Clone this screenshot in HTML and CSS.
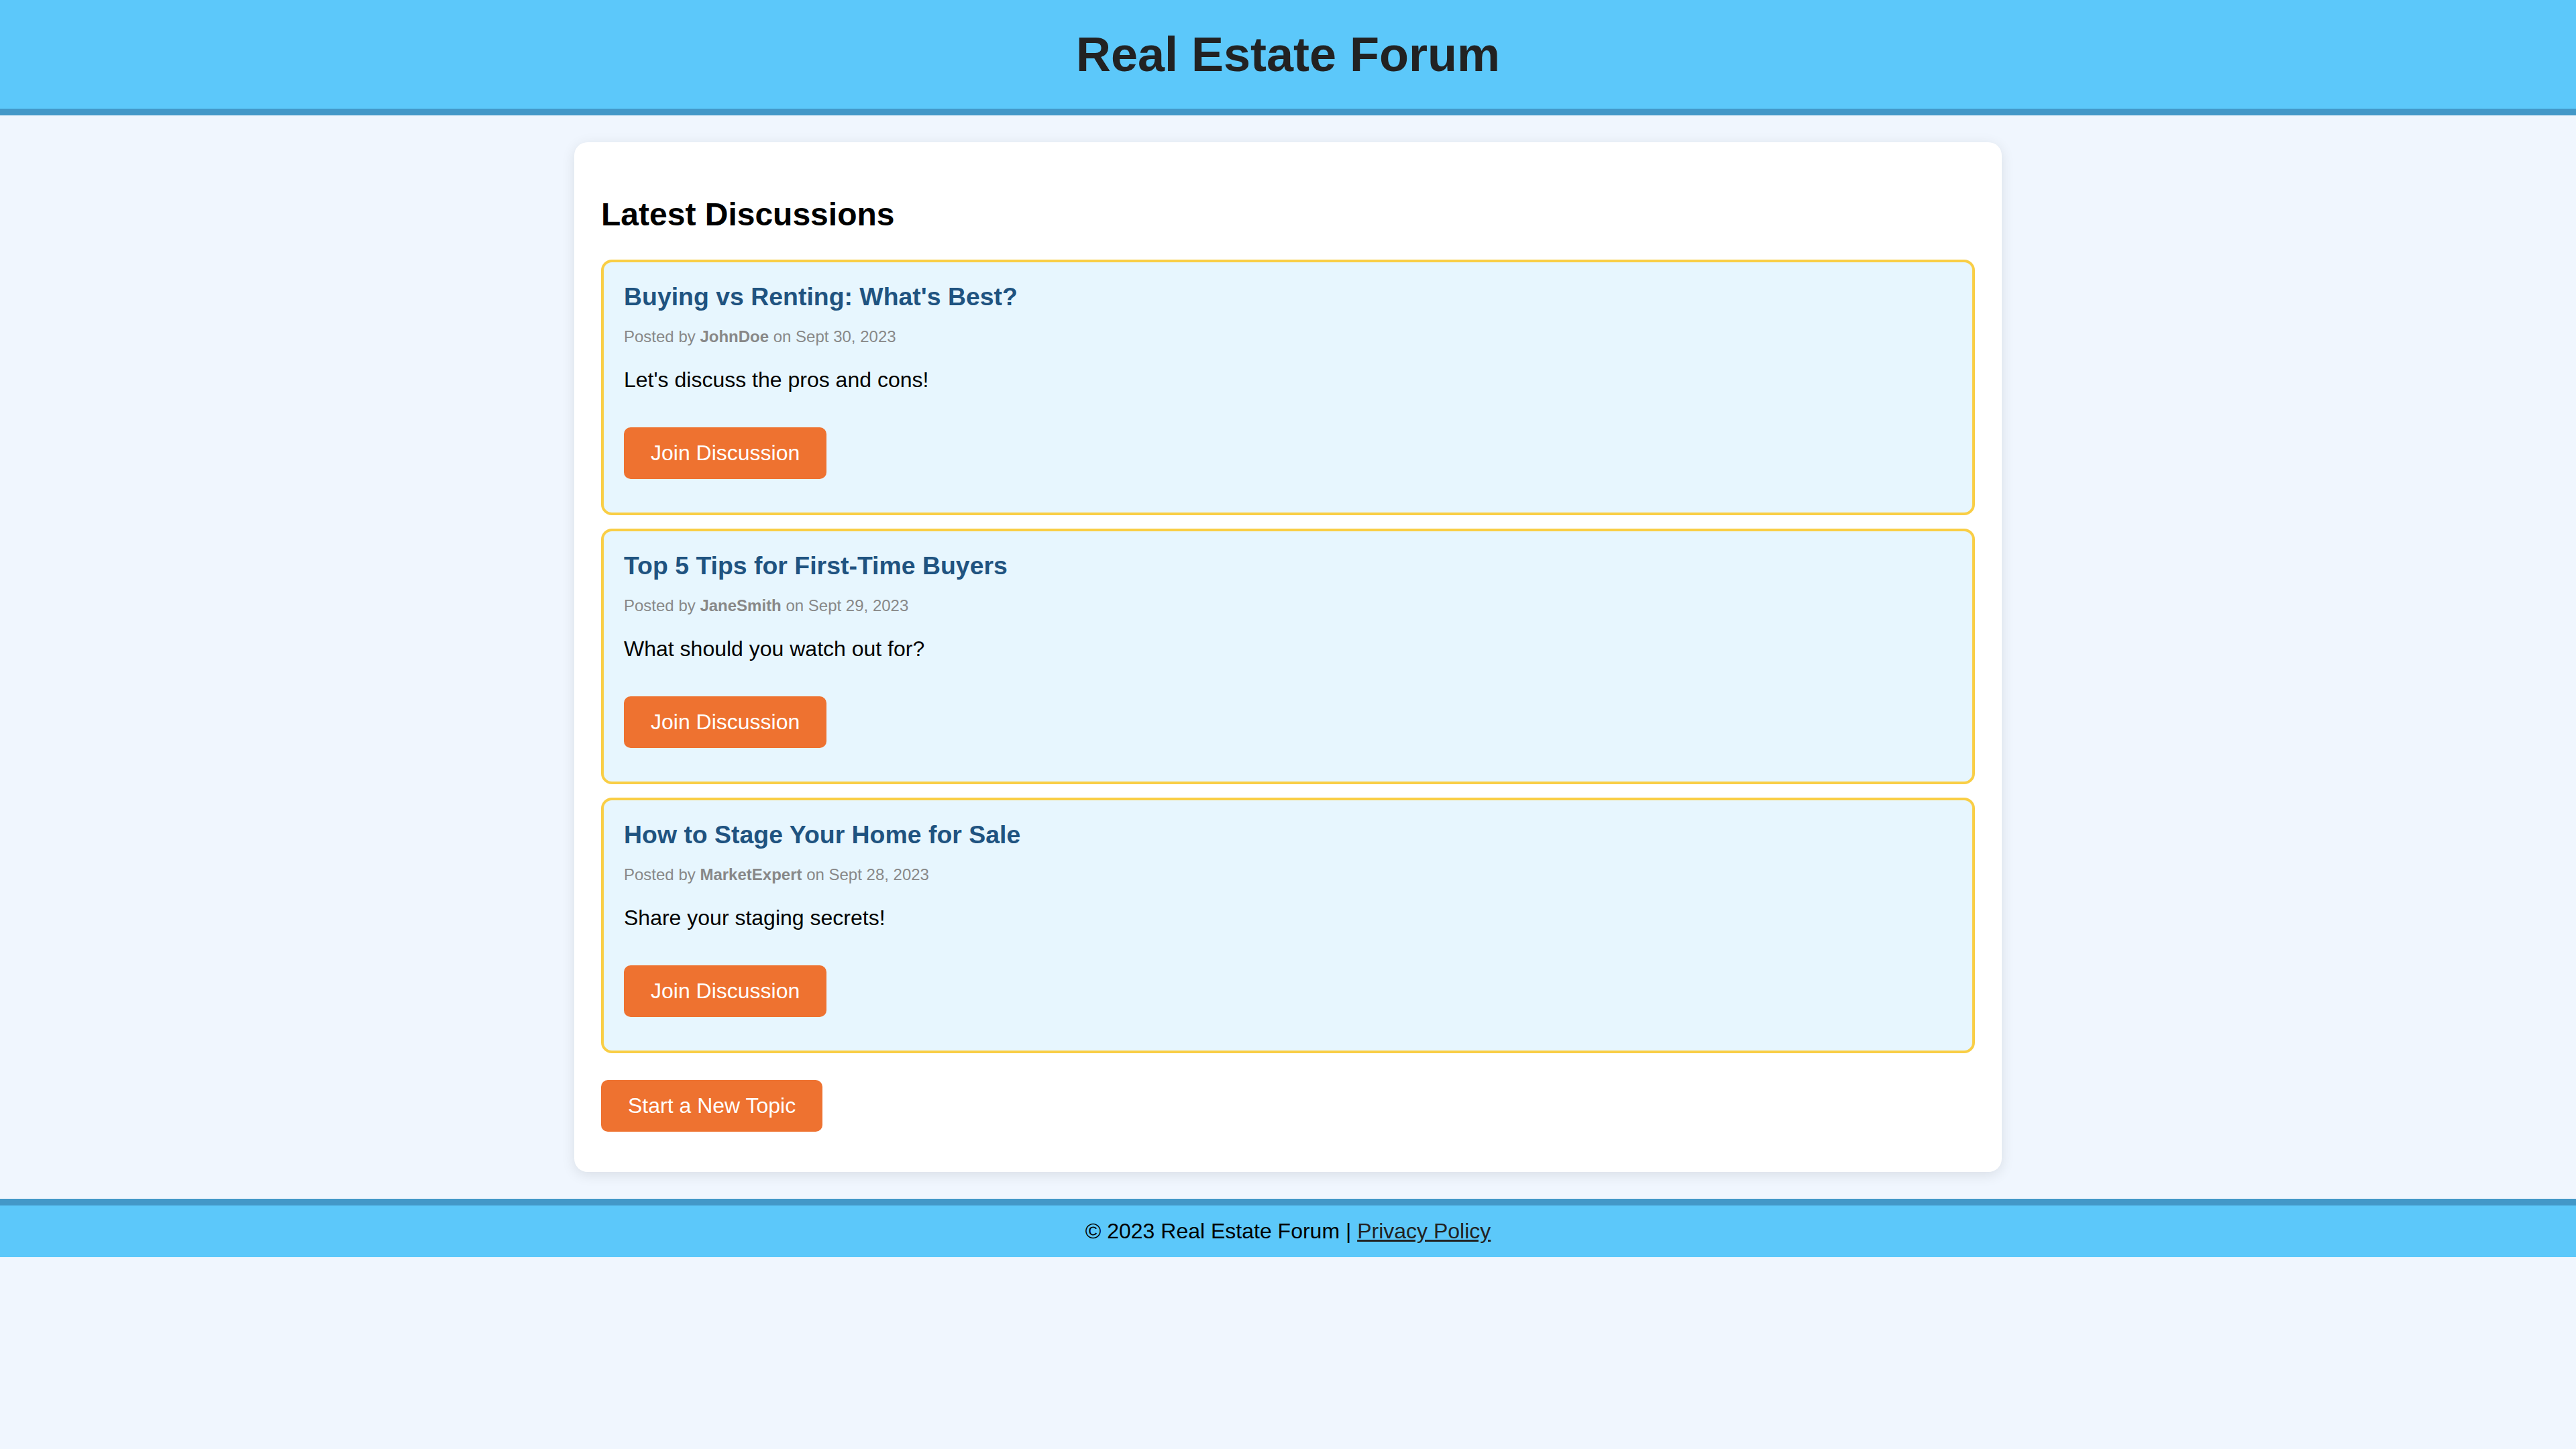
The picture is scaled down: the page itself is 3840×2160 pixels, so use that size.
FILE: index.html
```html
<!DOCTYPE html>
<html lang="en">
<head>
<meta charset="utf-8">
<title>Real Estate Forum</title>
<link rel="stylesheet" href="styles.css">
</head>
<body>
<header class="site-header">
  <h1 class="site-title">Real Estate Forum</h1>
</header>
<main class="container">
  <h2 class="section-title">Latest Discussions</h2>
  <article class="post">
    <h3 class="post-title">Buying vs Renting: What's Best?</h3>
    <p class="post-meta">Posted by <strong>JohnDoe</strong> on Sept 30, 2023</p>
    <p class="post-body">Let's discuss the pros and cons!</p>
    <a class="btn" href="#">Join Discussion</a>
  </article>
  <article class="post">
    <h3 class="post-title">Top 5 Tips for First-Time Buyers</h3>
    <p class="post-meta">Posted by <strong>JaneSmith</strong> on Sept 29, 2023</p>
    <p class="post-body">What should you watch out for?</p>
    <a class="btn" href="#">Join Discussion</a>
  </article>
  <article class="post">
    <h3 class="post-title">How to Stage Your Home for Sale</h3>
    <p class="post-meta">Posted by <strong>MarketExpert</strong> on Sept 28, 2023</p>
    <p class="post-body">Share your staging secrets!</p>
    <a class="btn" href="#">Join Discussion</a>
  </article>
  <a class="btn" href="#">Start a New Topic</a>
</main>
<footer class="site-footer">
  <p class="footer-text">&copy; 2023 Real Estate Forum | <a class="footer-link" href="#">Privacy Policy</a></p>
</footer>
</body>
</html>
```

FILE: styles.css
```css
html, body {
  margin: 0;
  padding: 0;
}
body {
  background: #f0f6fe;
  font-family: "Liberation Sans", Arial, sans-serif;
  font-size: 32px;
  color: #000;
}
.site-header {
  background: #5cc8fa;
  border-bottom: 10px solid #4398c8;
  padding: 40px;
  text-align: center;
}
.site-title {
  margin: 0;
  font-size: 72px;
  font-weight: bold;
  color: #222;
}
.container {
  max-width: 2048px;
  margin: 40px auto;
  padding: 40px;
  background: #fff;
  border-radius: 20px;
  box-shadow: 0 4px 20px rgba(0, 0, 0, 0.1);
}
.section-title {
  font-size: 48px;
  margin: 40px 0;
}
.post {
  background: #e7f6fe;
  border: 4px solid #f9ce45;
  border-radius: 16px;
  padding: 30px;
  margin-bottom: 20px;
}
.post-title {
  margin: 0;
  font-size: 37.44px;
  color: #1f5380;
}
.post-meta {
  font-size: 24px;
  color: #888;
  margin: 24px 0;
}
.post-body {
  margin: 32px 0;
}
.btn {
  display: inline-block;
  background: #ee7230;
  color: #fff;
  text-decoration: none;
  padding: 20px 40px;
  border-radius: 10px;
  margin: 20px 0;
}
.site-footer {
  background: #5cc8fa;
  border-top: 10px solid #4398c8;
  padding: 20px;
  text-align: center;
}
.footer-text {
  margin: 0;
}
.footer-link {
  color: #222;
  text-decoration: underline;
}
```
